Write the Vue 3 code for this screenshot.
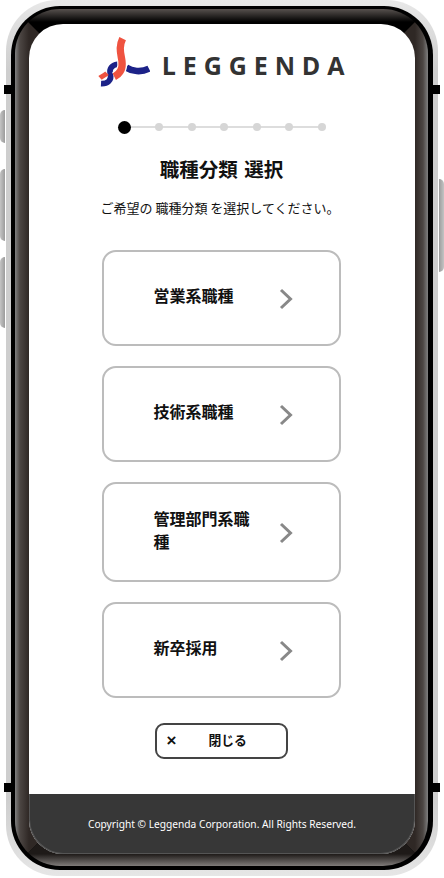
<script setup>
const steps = 7
const cards = ['営業系職種', '技術系職種', '管理部門系職種', '新卒採用']
</script>

<template>
  <div class="stage">
    <i class="key key-black left k1"></i>
    <i class="key key-black right k1"></i>
    <i class="key key-black left k2"></i>
    <i class="key key-black right k2"></i>
    <i class="key key-gray left g1"></i>
    <i class="key key-gray left g2"></i>
    <i class="key key-gray left g3"></i>
    <i class="key key-gray right g4"></i>
    <div class="shell">
      <div class="ring">
        <div class="bezel">
          <i class="panel p-top"></i>
          <i class="panel p-left"></i>
          <i class="panel p-right"></i>
          <i class="panel p-bottom"></i>
          <div class="screen">
            <main class="main">
              <header class="brand">
                <svg class="mark" viewBox="20 35 160 150" aria-hidden="true">
                  <path d="M82 117 C64 120 56 130 60 146 C65 164 52 176 32 175" fill="none" stroke="#1c2288" stroke-width="17" />
                  <path d="M108 127 C125 138 152 142 176 130" fill="none" stroke="#1c2288" stroke-width="20" />
                  <path d="M29 158 C38 150 44 150 50 144" fill="none" stroke="#ef5340" stroke-width="15" />
                  <path d="M96 108 C98 132 88 146 72 154" fill="none" stroke="#fff" stroke-width="29" />
                  <path d="M97 40 C84 66 92 85 95 108 C98 132 88 146 72 154" fill="none" stroke="#ef5340" stroke-width="22" />
                </svg>
                <span class="word">LEGGENDA</span>
              </header>
              <div class="stepper">
                <i class="rail"></i>
                <i v-for="n in steps" :key="n" class="dot" :class="{ active: n === 1 }"></i>
              </div>
              <h1 class="title">職種分類 選択</h1>
              <p class="lead">ご希望の 職種分類 を選択してください。</p>
              <div class="cards">
                <button v-for="c in cards" :key="c" class="card" type="button">
                  <span class="card-label">{{ c }}</span>
                  <svg class="chev" viewBox="0 0 14 22" aria-hidden="true">
                    <path d="M2 2 L11.5 11 L2 20" fill="none" stroke="#888" stroke-width="3" />
                  </svg>
                </button>
              </div>
              <button class="close" type="button">
                <span class="close-x">×</span>
                <span class="close-label">閉じる</span>
              </button>
            </main>
            <footer class="foot">Copyright © Leggenda Corporation. All Rights Reserved.</footer>
          </div>
        </div>
      </div>
    </div>
  </div>
</template>

<style>
html, body { margin: 0; background: #fff; }
</style>

<style scoped>
.stage {
  position: relative;
  width: 444px;
  height: 878px;
  overflow: hidden;
  background: #fff;
  font-family: "Noto Sans CJK JP", "Noto Sans", sans-serif;
  color: #111;
}
.shell {
  box-sizing: border-box;
  width: 432px;
  height: 876px;
  margin-left: 6px;
  padding: 6px 5px;
  border-radius: 51px;
  background: linear-gradient(to bottom, #e8e8e8 0, #cecece 70px, #cecece 800px, #e6e6e6 100%);
}
.ring {
  box-sizing: border-box;
  height: 100%;
  padding: 3px 5px 4px 4px;
  border-radius: 49px;
  background: #000;
}
.bezel {
  position: relative;
  box-sizing: border-box;
  height: 100%;
  padding: 15px 13px 12px 14px;
  border-radius: 45px;
  overflow: hidden;
}
.panel { position: absolute; inset: 0; display: block; }
.p-top {
  background: linear-gradient(to bottom, #57514e 0, #000 13px);
  clip-path: polygon(0 0, 100% 0, calc(100% - 40px) 40px, 40px 40px);
}
.p-left {
  background: linear-gradient(to right, #808080 0, #4c4643 5px, #2f2825 14px);
  clip-path: polygon(0 0, 40px 40px, 40px calc(100% - 40px), 0 100%);
}
.p-right {
  background: linear-gradient(to left, #808080 0, #4c4643 5px, #2f2825 13px);
  clip-path: polygon(100% 0, calc(100% - 40px) 40px, calc(100% - 40px) calc(100% - 40px), 100% 100%);
}
.p-bottom {
  background: linear-gradient(to top, #807c7a 0, #1e1a18 12px);
  clip-path: polygon(0 100%, 40px calc(100% - 40px), calc(100% - 40px) calc(100% - 40px), 100% 100%);
}
.screen {
  position: relative;
  display: flex;
  flex-direction: column;
  height: 100%;
  border-radius: 34px;
  overflow: hidden;
  background: #fff;
}
.main {
  flex: 1;
  display: flex;
  flex-direction: column;
  align-items: center;
}
.brand {
  display: flex;
  align-items: flex-start;
  width: 100%;
  box-sizing: border-box;
  padding: 13px 0 0 67.5px;
  height: 84px;
}
.mark { width: 53.3px; height: 50px; flex: none; }
.word {
  margin: 11px 0 0 12px;
  font-family: "Open Sans", sans-serif;
  font-weight: 700;
  font-size: 25px;
  line-height: 34px;
  letter-spacing: 6.9px;
  color: #333;
}
.stepper {
  position: relative;
  display: flex;
  align-items: center;
  justify-content: space-between;
  width: 208px;
  height: 13px;
  margin: 12.5px 0 0 -1px;
}
.rail {
  position: absolute;
  left: 6px;
  right: 4px;
  top: 5.5px;
  height: 2px;
  background: #ddd;
}
.dot {
  position: relative;
  display: block;
  width: 8px;
  height: 8px;
  border-radius: 50%;
  background: #d6d6d6;
}
.dot.active { width: 13px; height: 13px; background: #000; }
.title {
  margin: 21px 0 0 -1px;
  font-size: 19.5px;
  line-height: 28px;
  font-weight: 700;
  word-spacing: 2px;
  color: #111;
}
.lead {
  margin: 15px 0 0 -4px;
  font-size: 13px;
  line-height: 20px;
  color: #111;
}
.cards {
  display: flex;
  flex-direction: column;
  gap: 20px;
  width: 239px;
  margin: 32px 0 0 -2px;
}
.card {
  box-sizing: border-box;
  display: flex;
  align-items: center;
  justify-content: space-between;
  min-height: 96px;
  padding: 23px 46px 27px 50px;
  border: 2px solid #bcbcbc;
  border-radius: 14px;
  background: #fff;
  font: inherit;
  text-align: left;
}
.card-label {
  width: 104px;
  font-size: 16px;
  line-height: 23px;
  font-weight: 700;
  color: #111;
}
.chev { width: 14px; height: 22px; flex: none; margin-top: 6px; }
.close {
  box-sizing: border-box;
  display: flex;
  align-items: center;
  width: 133px;
  height: 36px;
  margin: 25px 0 0 -2px;
  padding: 0 0 0 10px;
  border: 2px solid #444;
  border-radius: 9px;
  background: #fff;
  font: inherit;
  color: #111;
}
.close-x { width: 42px; font-family: "Liberation Sans", sans-serif; font-size: 17px; font-weight: 700; text-align: left; line-height: 1; }
.close-label { font-size: 12.8px; font-weight: 700; line-height: 1; }
.foot {
  height: 60px;
  flex: none;
  box-sizing: border-box;
  padding-top: 20px;
  background: #373737;
  border-radius: 0 0 34px 34px;
  box-shadow: inset 1px -1px 0 #555, inset -1px -1px 0 #555;
  color: #fff;
  text-align: center;
  font-family: "Noto Sans", sans-serif;
  font-size: 10.2px;
  line-height: 20px;
}
.key { position: absolute; display: block; }
.key-black { background: #000; width: 7px; height: 9px; }
.key-black.left { left: 4px; }
.key-black.right { left: 433px; }
.k1 { top: 85px; }
.k2 { top: 783px; }
.key-gray { width: 5px; background: linear-gradient(to right, #c4c4c4, #9c9c9c); }
.key-gray.left { left: 0; border-radius: 5px 0 0 5px; }
.key-gray.right { left: 439px; border-radius: 0 5px 5px 0; background: linear-gradient(to left, #c4c4c4, #9c9c9c); }
.g1 { top: 110px; height: 33px; }
.g2 { top: 169px; height: 72px; }
.g3 { top: 257px; height: 71px; }
.g4 { top: 179px; height: 93px; }
</style>
